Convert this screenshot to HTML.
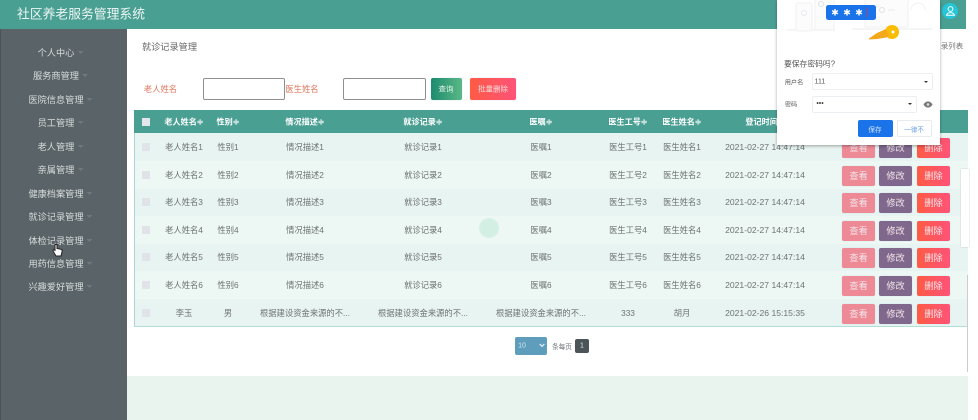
<!DOCTYPE html>
<html lang="zh"><head><meta charset="utf-8"><title>社区养老服务管理系统</title>
<style>
html,body{margin:0;padding:0;width:978px;height:420px;overflow:hidden;background:#fff}
body{font-family:"Liberation Sans","Noto Sans CJK SC",sans-serif;position:relative}
#w{position:absolute;left:0;top:0;width:978px;height:420px;overflow:hidden;filter:blur(.35px)}
#w div,#w span.a{position:absolute}
.c{position:absolute;transform:translate(-50%,-50%);white-space:nowrap;font-size:8.3px;color:#6e7373}
.c[style*="left:765px"]{font-size:8.6px}
.s{color:#d8dcdc;font-size:9.2px}
.s i{position:absolute;left:100%;top:50%;margin-left:3px;margin-top:-1px;width:0;height:0;border:3px solid transparent;border-top-color:#6f787a;border-bottom:0}
.h{color:#fff;font-weight:bold;font-size:8.1px}
.b{width:33px;height:20px;border-radius:2px;color:#f1e6ea;font-size:9.2px;line-height:20px;text-align:center;box-shadow:0 0 1px #b7d6e6}
.v{left:842px;background:#ed8a96}
.e{left:879px;background:#80688c}
.d{left:917px;background:linear-gradient(90deg,#ff5b45,#ff5378)}
.r{left:135px;width:833px;height:28px}
.k{left:142px;width:8px;height:8px;background:#e0e3e8}
</style></head><body><div id="w">
<div style="left:0;top:0;width:966px;height:29px;background:#4a9f93"></div>
<div class="c" style="left:81px;top:13px;color:#eef6f4;font-size:12.8px">社区养老服务管理系统</div>
<div style="left:0;top:29px;width:127px;height:391px;background:#5a6367"></div>
<div style="left:0;top:29px;width:1px;height:391px;background:#4b5357"></div>
<div class="c s" style="left:56px;top:52px">个人中心<i></i></div>
<div class="c s" style="left:56px;top:75px">服务商管理<i></i></div>
<div class="c s" style="left:56px;top:99px">医院信息管理<i></i></div>
<div class="c s" style="left:56px;top:122px">员工管理<i></i></div>
<div class="c s" style="left:56px;top:146px">老人管理<i></i></div>
<div class="c s" style="left:56px;top:169px">亲属管理<i></i></div>
<div class="c s" style="left:56px;top:193px">健康档案管理<i></i></div>
<div class="c s" style="left:56px;top:216px">就诊记录管理<i></i></div>
<div class="c s" style="left:56px;top:240px">体检记录管理<i></i></div>
<div class="c s" style="left:56px;top:263px">用药信息管理<i></i></div>
<div class="c s" style="left:56px;top:286px">兴趣爱好管理<i></i></div>
<svg style="position:absolute;left:52px;top:243px" width="11" height="14" viewBox="0 0 11 14"><path d="M3 1.5v6L1.5 6.5 1 8l3 5h5l1-4V6.5L5 5.5V1.5z" fill="#fff" stroke="#222" stroke-width="1"/></svg>

<div class="c" style="left:169.500px;top:46px;font-size:9.200px;color:#666">就诊记录管理</div>
<div class="c" style="left:160.500px;top:89px;color:#e0775c;font-size:8.300px">老人姓名</div>
<div style="left:203px;top:78px;width:80px;height:20px;border:1px solid #8f8f8f;border-radius:2px;background:#fff"></div>
<div class="c" style="left:302px;top:89px;color:#e0775c;font-size:8.300px">医生姓名</div>
<div style="left:343px;top:78px;width:81px;height:20px;border:1px solid #8f8f8f;border-radius:2px;background:#fff"></div>
<div style="left:431px;top:78px;width:31px;height:22px;border-radius:2px;background:linear-gradient(90deg,#1e8b6e,#5ab887);box-shadow:0 0 1px #b7d6e6"></div>
<div class="c" style="left:446px;top:89px;color:#e6f3ee;font-size:7.500px">查询</div>
<div style="left:470px;top:78px;width:46px;height:22px;border-radius:2px;background:linear-gradient(90deg,#ff5b45,#ff5378);box-shadow:0 0 1px #b7d6e6"></div>
<div class="c" style="left:493px;top:89px;color:#f6dede;font-size:7.500px">批量删除</div>

<div style="left:134px;top:110px;width:834px;height:23px;background:#4a9f93"></div>
<div style="left:142px;top:118px;width:8px;height:8px;background:#e2e6ea"></div>
<div class="c h" style="left:184px;top:122px">老人姓名≑</div>
<div class="c h" style="left:228px;top:122px">性别≑</div>
<div class="c h" style="left:305px;top:122px">情况描述≑</div>
<div class="c h" style="left:423px;top:122px">就诊记录≑</div>
<div class="c h" style="left:541px;top:122px">医嘱≑</div>
<div class="c h" style="left:628px;top:122px">医生工号≑</div>
<div class="c h" style="left:682px;top:122px">医生姓名≑</div>
<div class="c h" style="left:765px;top:122px;font-size:8.100px">登记时间≑</div>

<div class="r" style="top:133px;background:#e8f4f1"></div>
<div class="r" style="top:161px;background:#edf7f3"></div>
<div class="r" style="top:189px;background:#e8f4f1"></div>
<div class="r" style="top:216px;background:#edf7f3"></div>
<div class="r" style="top:244px;background:#e8f4f1"></div>
<div class="r" style="top:271px;background:#edf7f3"></div>
<div class="r" style="top:299px;height:27px;background:#e8f4f1"></div>
<div style="left:134px;top:133px;width:1px;height:193px;background:#a9d6d0"></div>
<div style="left:134px;top:326px;width:834px;height:1px;background:#b2dcd6"></div>
<div style="left:479px;top:218px;width:20px;height:20px;border-radius:50%;background:radial-gradient(circle,#d3efe3 0,#d3efe3 55%,#dcf2e9 100%)"></div>

<div class="k" style="top:143px"></div><div class="c" style="left:184px;top:147px">老人姓名1</div><div class="c" style="left:228px;top:147px">性别1</div><div class="c" style="left:305px;top:147px">情况描述1</div><div class="c" style="left:423px;top:147px">就诊记录1</div><div class="c" style="left:541px;top:147px">医嘱1</div><div class="c" style="left:628px;top:147px">医生工号1</div><div class="c" style="left:682px;top:147px">医生姓名1</div><div class="c" style="left:765px;top:147px">2021-02-27 14:47:14</div>
<div class="k" style="top:171px"></div><div class="c" style="left:184px;top:175px">老人姓名2</div><div class="c" style="left:228px;top:175px">性别2</div><div class="c" style="left:305px;top:175px">情况描述2</div><div class="c" style="left:423px;top:175px">就诊记录2</div><div class="c" style="left:541px;top:175px">医嘱2</div><div class="c" style="left:628px;top:175px">医生工号2</div><div class="c" style="left:682px;top:175px">医生姓名2</div><div class="c" style="left:765px;top:175px">2021-02-27 14:47:14</div>
<div class="k" style="top:198px"></div><div class="c" style="left:184px;top:202px">老人姓名3</div><div class="c" style="left:228px;top:202px">性别3</div><div class="c" style="left:305px;top:202px">情况描述3</div><div class="c" style="left:423px;top:202px">就诊记录3</div><div class="c" style="left:541px;top:202px">医嘱3</div><div class="c" style="left:628px;top:202px">医生工号3</div><div class="c" style="left:682px;top:202px">医生姓名3</div><div class="c" style="left:765px;top:202px">2021-02-27 14:47:14</div>
<div class="k" style="top:226px"></div><div class="c" style="left:184px;top:230px">老人姓名4</div><div class="c" style="left:228px;top:230px">性别4</div><div class="c" style="left:305px;top:230px">情况描述4</div><div class="c" style="left:423px;top:230px">就诊记录4</div><div class="c" style="left:541px;top:230px">医嘱4</div><div class="c" style="left:628px;top:230px">医生工号4</div><div class="c" style="left:682px;top:230px">医生姓名4</div><div class="c" style="left:765px;top:230px">2021-02-27 14:47:14</div>
<div class="k" style="top:253px"></div><div class="c" style="left:184px;top:257px">老人姓名5</div><div class="c" style="left:228px;top:257px">性别5</div><div class="c" style="left:305px;top:257px">情况描述5</div><div class="c" style="left:423px;top:257px">就诊记录5</div><div class="c" style="left:541px;top:257px">医嘱5</div><div class="c" style="left:628px;top:257px">医生工号5</div><div class="c" style="left:682px;top:257px">医生姓名5</div><div class="c" style="left:765px;top:257px">2021-02-27 14:47:14</div>
<div class="k" style="top:281px"></div><div class="c" style="left:184px;top:285px">老人姓名6</div><div class="c" style="left:228px;top:285px">性别6</div><div class="c" style="left:305px;top:285px">情况描述6</div><div class="c" style="left:423px;top:285px">就诊记录6</div><div class="c" style="left:541px;top:285px">医嘱6</div><div class="c" style="left:628px;top:285px">医生工号6</div><div class="c" style="left:682px;top:285px">医生姓名6</div><div class="c" style="left:765px;top:285px">2021-02-27 14:47:14</div>
<div class="k" style="top:309px"></div><div class="c" style="left:184px;top:313px">李玉</div><div class="c" style="left:228px;top:313px">男</div><div class="c" style="left:305px;top:313px">根据建设资金来源的不...</div><div class="c" style="left:423px;top:313px">根据建设资金来源的不...</div><div class="c" style="left:541px;top:313px">根据建设资金来源的不...</div><div class="c" style="left:628px;top:313px">333</div><div class="c" style="left:682px;top:313px">胡月</div><div class="c" style="left:765px;top:313px">2021-02-26 15:15:35</div>

<div class="b v" style="top:138px">查看</div><div class="b e" style="top:138px">修改</div><div class="b d" style="top:138px">删除</div>
<div class="b v" style="top:166px">查看</div><div class="b e" style="top:166px">修改</div><div class="b d" style="top:166px">删除</div>
<div class="b v" style="top:193px">查看</div><div class="b e" style="top:193px">修改</div><div class="b d" style="top:193px">删除</div>
<div class="b v" style="top:221px">查看</div><div class="b e" style="top:221px">修改</div><div class="b d" style="top:221px">删除</div>
<div class="b v" style="top:248px">查看</div><div class="b e" style="top:248px">修改</div><div class="b d" style="top:248px">删除</div>
<div class="b v" style="top:276px">查看</div><div class="b e" style="top:276px">修改</div><div class="b d" style="top:276px">删除</div>
<div class="b v" style="top:304px">查看</div><div class="b e" style="top:304px">修改</div><div class="b d" style="top:304px">删除</div>

<div style="left:515px;top:337px;width:32px;height:18px;border-radius:2px;background:#5f9dbd"></div>
<div class="c" style="left:522px;top:346px;color:#d5e6ef;font-size:7px">10</div>
<svg style="position:absolute;left:539px;top:343px" width="6" height="5" viewBox="0 0 6 5"><path d="M.7 1l2.3 2.4L5.3 1" fill="none" stroke="#e8f2f7" stroke-width="1.2"/></svg>
<div class="c" style="left:562px;top:346px;font-size:6.600px">条每页</div>
<div style="left:575px;top:339px;width:14px;height:14px;border-radius:2px;background:#4b5559"></div>
<div class="c" style="left:582px;top:346px;color:#e8e8e8;font-size:7px">1</div>

<div style="left:127px;top:376px;width:841px;height:44px;background:#e9f4ef"></div>
<div style="left:961px;top:169px;width:8px;height:78px;background:#fff;box-shadow:0 0 1px #aaa"></div>
<div style="left:967px;top:275px;width:1px;height:97px;background:#ccc"></div>
<div class="c" style="left:952px;top:46px;font-size:7.400px;color:#777">录列表</div>
<div style="left:942px;top:3px;width:16px;height:16px;border-radius:50%;background:#25c5d8"></div>
<svg style="position:absolute;left:945px;top:5px" width="11" height="12" viewBox="0 0 11 12"><circle cx="5.5" cy="4" r="2.4" fill="none" stroke="#fff"/><path d="M1.5 10.3c.6-2 2-2.7 4-2.7s3.4.7 4 2.7z" fill="none" stroke="#fff"/></svg>

<div style="left:777px;top:0;width:163px;height:145px;background:#fff;box-shadow:0 1px 3px rgba(0,0,0,.35)"></div>
<svg style="position:absolute;left:777px;top:0" width="165" height="50" viewBox="0 0 165 50">
<path d="M10 30H58M75 29H155" stroke="#f1f3f4" stroke-width="1.5"/>
<rect x="19" y="3" width="16" height="28" rx="2" fill="#fcfcfd" stroke="#f0f1f3"/><circle cx="27" cy="13" r="2.500" fill="none" stroke="#e6e8eb"/>
<path d="M38 0v30h19V0" fill="#fcfcfd" stroke="#f0f1f3"/><circle cx="44" cy="4" r="2.500" fill="none" stroke="#dfe2e5"/>
<path d="M88 0v27h43V0" fill="#fcfcfd" stroke="#f0f1f3"/><circle cx="105" cy="10" r="2.500" fill="none" stroke="#dfe2e5"/><path d="M111 10h7" stroke="#e8eaec"/>
<path d="M134 10a7 7 0 0 1 14 0" fill="none" stroke="#f0f1f3"/>
<rect x="49" y="5" width="50" height="15" rx="2.500" fill="#1a73e8"/>
<path d="M90.500 8v9" stroke="#a3477a"/>
<circle cx="115" cy="32" r="7" fill="#fbbc04"/><circle cx="116" cy="32" r="1.500" fill="#fff"/>
<path d="M92 38.500l8-5.500 9-4 3 8-12 2-8 .5z" fill="#f4a81c"/>
</svg>
<div class="c" style="left:835px;top:12.500px;color:#fff;font-size:9px">✱</div>
<div class="c" style="left:847px;top:12.500px;color:#fff;font-size:9px">✱</div>
<div class="c" style="left:859px;top:12.500px;color:#fff;font-size:9px">✱</div>
<div class="c" style="left:809.500px;top:64px;font-size:7.800px;color:#555">要保存密码吗?</div>
<div class="c" style="left:794px;top:82px;font-size:6.200px;color:#555">用户名</div>
<div style="left:812px;top:73px;width:119px;height:15px;border:1px solid #eceff2;border-radius:2px"></div>
<div class="c" style="left:820px;top:82px;font-size:7px;color:#555">111</div>
<div style="left:924px;top:81px;width:0;height:0;border:2.500px solid transparent;border-top-color:#333;border-bottom:0"></div>
<div class="c" style="left:791px;top:104px;font-size:6.200px;color:#555">密码</div>
<div style="left:812px;top:96px;width:103px;height:15px;border:1px solid #eceff2;border-radius:2px"></div>
<div class="c" style="left:820px;top:104px;font-size:7px;color:#444">•••</div>
<div style="left:908px;top:103px;width:0;height:0;border:2.500px solid transparent;border-top-color:#333;border-bottom:0"></div>
<svg style="position:absolute;left:923px;top:101px" width="10" height="7" viewBox="0 0 10 7"><path d="M.5 3.500C2 1 3.500.5 5 .5S8 1 9.500 3.500C8 6 6.500 6.500 5 6.500S2 6 .5 3.500z" fill="#777"/><circle cx="5" cy="3.500" r="1.300" fill="#ddd"/></svg>
<div style="left:858px;top:120px;width:35px;height:17px;border-radius:2px;background:#1a73e8"></div>
<div class="c" style="left:875px;top:129px;color:#d5e4fb;font-size:6.600px">保存</div>
<div style="left:897px;top:120px;width:33px;height:15px;border:1px solid #e8ebee;border-radius:2px"></div>
<div class="c" style="left:914px;top:129px;color:#6b9fe6;font-size:6.600px">一律不</div>
</div></body></html>
